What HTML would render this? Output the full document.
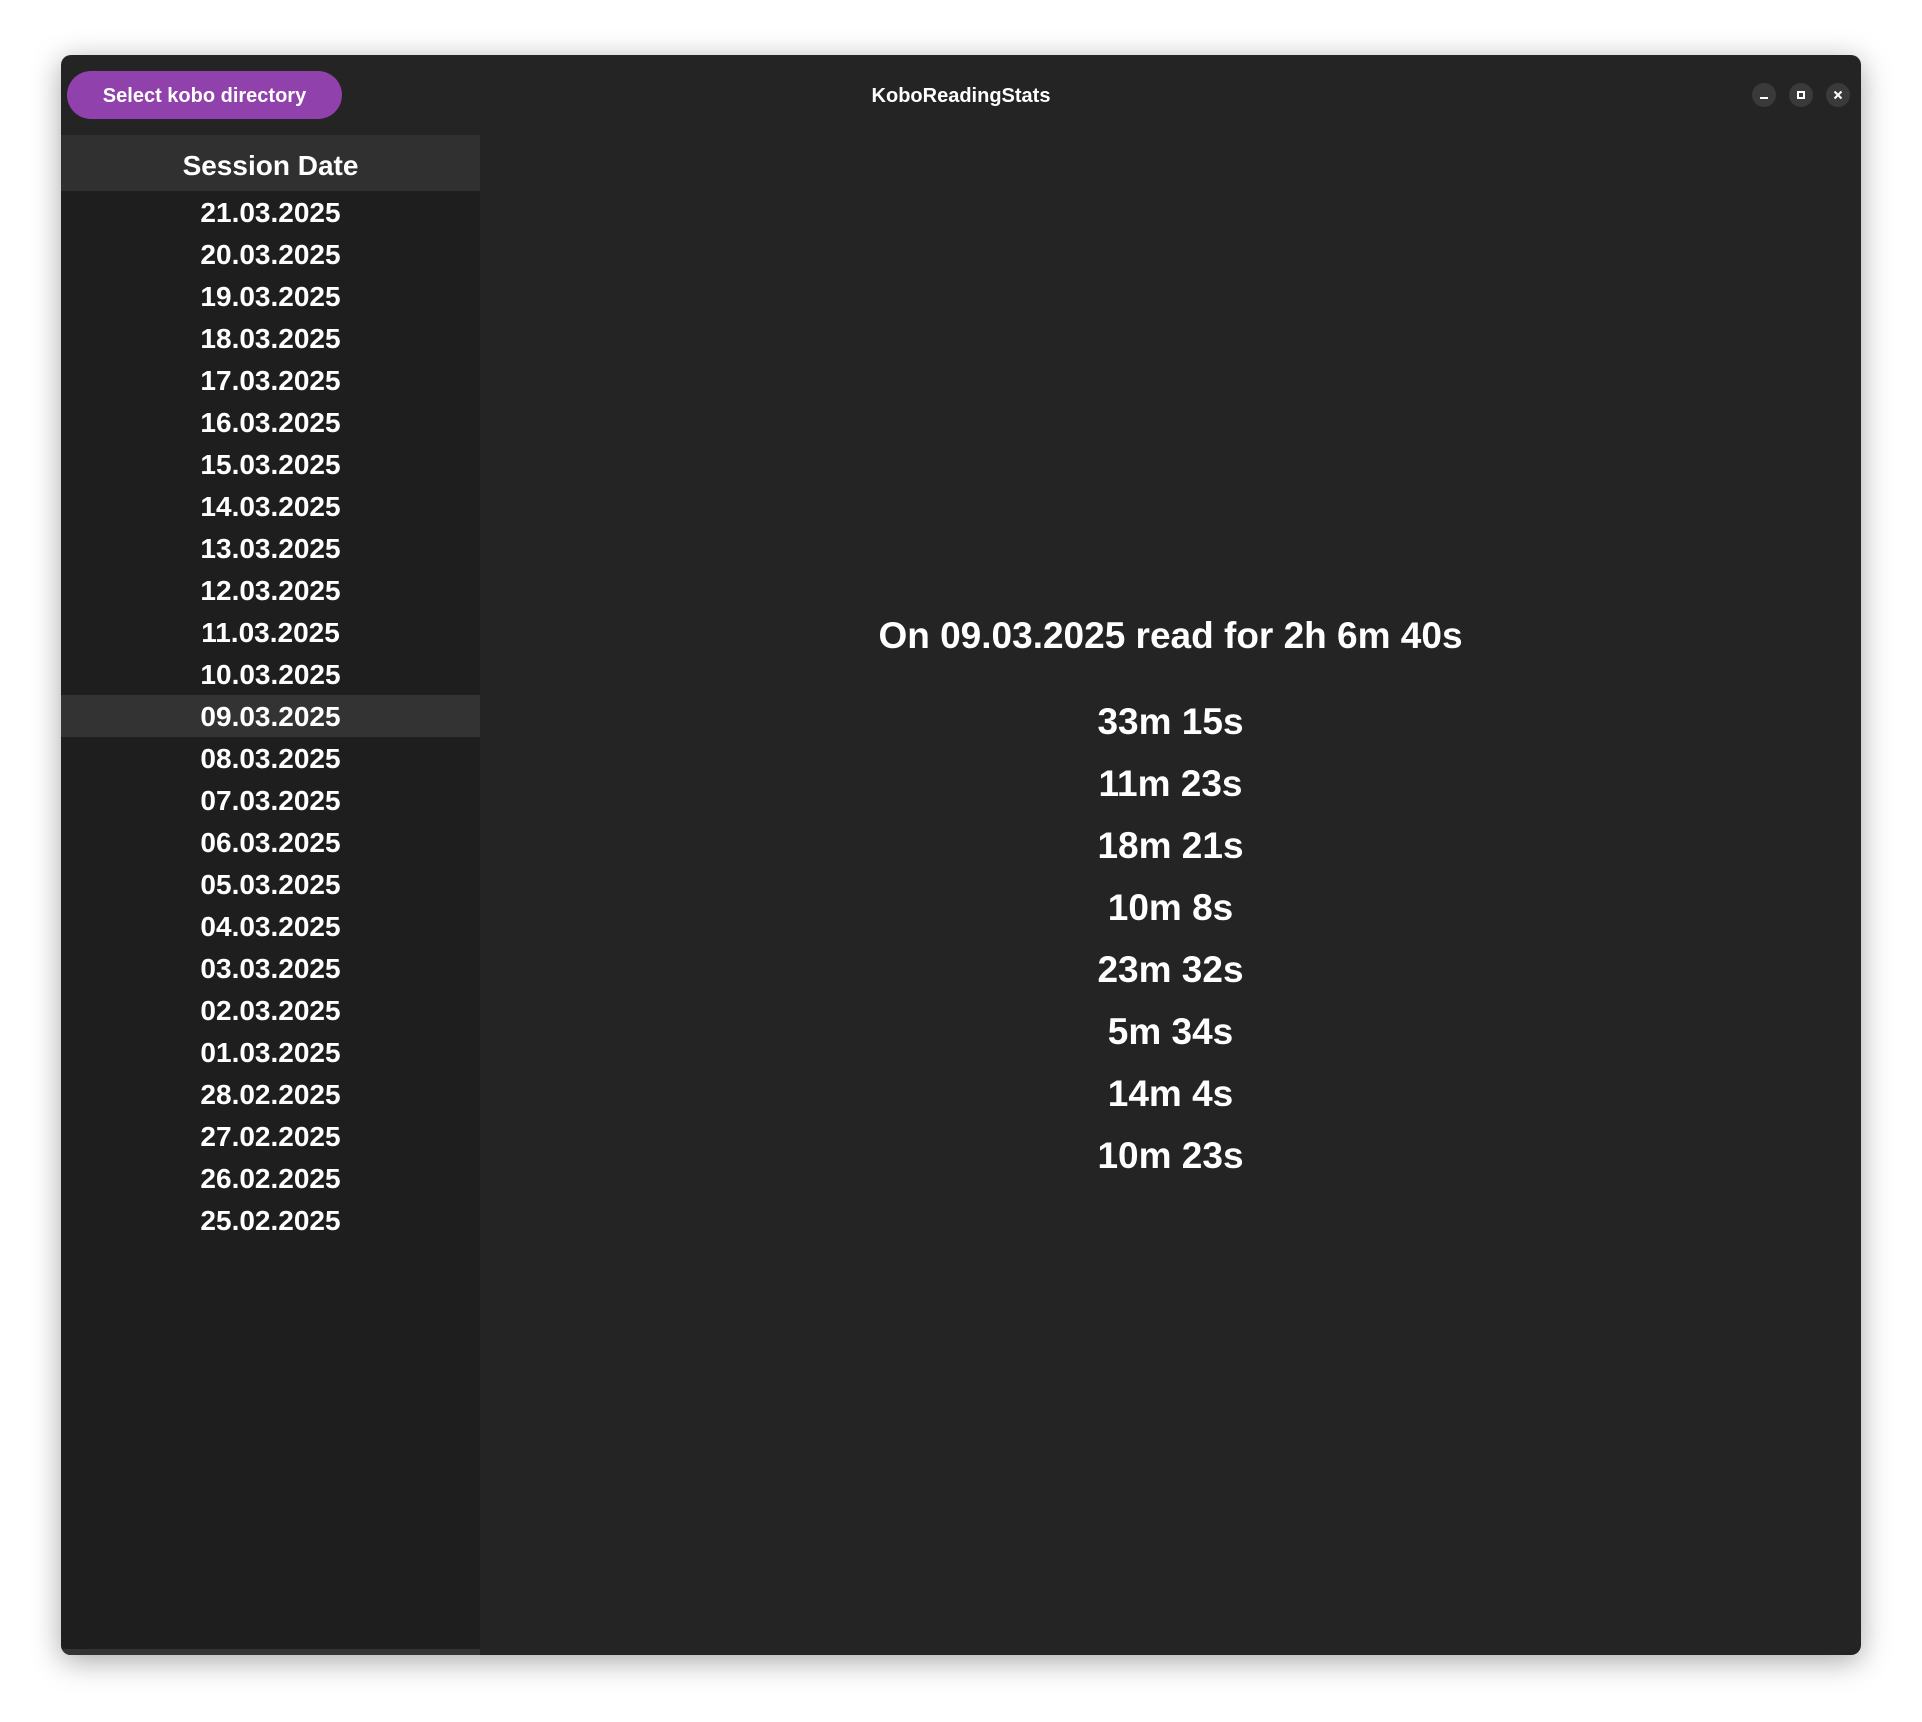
<!DOCTYPE html>
<html><head><meta charset="utf-8"><style>
*{margin:0;padding:0;box-sizing:border-box}
body{width:1922px;height:1722px;background:#fff;font-family:"Liberation Sans",sans-serif;font-weight:bold;color:#fff;position:relative;overflow:hidden}
.win{position:absolute;left:61px;top:55px;width:1800px;height:1600px;background:#242424;border-radius:10px;overflow:hidden;box-shadow:0 6px 30px rgba(0,0,0,.35)}
.btn{position:absolute;left:6px;top:16px;width:275px;height:48px;border-radius:24px;background:#9141ac;font-size:20px;line-height:50px;text-align:center}
.title{position:absolute;left:0;right:0;top:29px;text-align:center;font-size:20px;line-height:24px}
.ctl{position:absolute;top:28px;width:24px;height:24px;border-radius:12px;background:#3a3a3a}
.side{position:absolute;left:0;top:80px;width:419px;bottom:0;background:#1e1e1e}
.hdr{height:56px;background:#303030;text-align:center;font-size:28px;line-height:62px}
.row{height:42px;line-height:44px;text-align:center;font-size:28px}
.sel{background:#333}
.bar{position:absolute;left:0;right:0;bottom:0;height:6px;background:#333}
.main{position:absolute;left:419px;right:0;top:0;text-align:center}
.h{position:absolute;left:0;right:0;top:560px;font-size:37px;line-height:42px}
.d{position:absolute;left:0;right:0;font-size:37px;line-height:44px}
</style></head><body>
<div class="win">
<div class="btn">Select kobo directory</div>
<div class="title">KoboReadingStats</div>
<div class="ctl" style="left:1691px"><div style="position:absolute;left:8px;top:14px;width:8px;height:2px;background:#fff"></div></div>
<div class="ctl" style="left:1728px"><div style="position:absolute;left:8px;top:8px;width:8px;height:8px;border:2px solid #fff"></div></div>
<div class="ctl" style="left:1765px"><svg width="24" height="24" style="position:absolute;left:0;top:0"><path d="M8.5 8.5L15.5 15.5M15.5 8.5L8.5 15.5" stroke="#fff" stroke-width="2"/></svg></div>
<div class="side">
<div class="hdr">Session Date</div>
<div class="row">21.03.2025</div><div class="row">20.03.2025</div><div class="row">19.03.2025</div><div class="row">18.03.2025</div><div class="row">17.03.2025</div><div class="row">16.03.2025</div><div class="row">15.03.2025</div><div class="row">14.03.2025</div><div class="row">13.03.2025</div><div class="row">12.03.2025</div><div class="row">11.03.2025</div><div class="row">10.03.2025</div><div class="row sel">09.03.2025</div><div class="row">08.03.2025</div><div class="row">07.03.2025</div><div class="row">06.03.2025</div><div class="row">05.03.2025</div><div class="row">04.03.2025</div><div class="row">03.03.2025</div><div class="row">02.03.2025</div><div class="row">01.03.2025</div><div class="row">28.02.2025</div><div class="row">27.02.2025</div><div class="row">26.02.2025</div><div class="row">25.02.2025</div>
<div class="bar"></div>
</div>
<div class="main">
<div class="h">On 09.03.2025 read for 2h 6m 40s</div>
<div class="d" style="top:645px">33m 15s</div>
<div class="d" style="top:707px">11m 23s</div>
<div class="d" style="top:769px">18m 21s</div>
<div class="d" style="top:831px">10m 8s</div>
<div class="d" style="top:893px">23m 32s</div>
<div class="d" style="top:955px">5m 34s</div>
<div class="d" style="top:1017px">14m 4s</div>
<div class="d" style="top:1079px">10m 23s</div>
</div>
</div>
</body></html>
